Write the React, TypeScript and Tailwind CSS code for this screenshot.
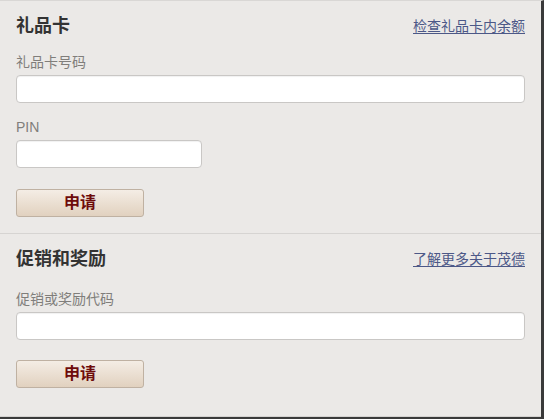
import React from 'react';

const font = "font-['Liberation_Sans','Noto_Sans_CJK_SC',sans-serif]";

const Field = ({ label, className, mt }: { label: string; className: string; mt: string }) => (
  <div>
    <div className={`${mt} text-[14px] leading-[16px] text-[#807e7b]`}>{label}</div>
    <input
      type="text"
      className={`mt-[5px] block h-[28px] rounded-[4px] border border-[#c9c7c5] bg-white shadow-[inset_0_1px_1px_rgba(0,0,0,0.06)] outline-none ${className}`}
    />
  </div>
);

const ApplyButton = ({ mt }: { mt: string }) => (
  <button
    type="button"
    className={`${mt} block h-[28px] w-[128px] rounded-[3px] border border-[#bfb1a2] bg-gradient-to-b from-[#f4ede5] to-[#e1d1bf] text-[16px] font-bold leading-none text-[#6e0b0b]`}
  >
    申请
  </button>
);

const Header = ({ title, link }: { title: string; link: string }) => (
  <div className="flex h-[22px] items-center justify-between">
    <h2 className="text-[18px] font-bold leading-[22px] text-[#333]">{title}</h2>
    <a href="#" className="text-[14px] leading-[18px] text-[#4c5887] underline underline-offset-2">
      {link}
    </a>
  </div>
);

export default function App() {
  return (
    <div className={`${font} h-[419px] w-[544px] border-t border-r-[3px] border-b-[2px] border-t-[#d9d7d5] border-r-[#3a3a3a] border-b-[#3a3a3a] bg-[#ebe9e7]`}>
      <div className="flex h-full flex-col border-b border-[#d4d2d0]">
        {/* 礼品卡 */}
        <section className="border-b border-[#d6d4d2] px-4 pt-[14px] pb-[16px]">
          <Header title="礼品卡" link="检查礼品卡内余额" />
          <Field label="礼品卡号码" mt="mt-[17px]" className="w-full" />
          <Field label="PIN" mt="mt-[16px]" className="w-[186px]" />
          <ApplyButton mt="mt-[21px]" />
        </section>

        {/* 促销和奖励 */}
        <section className="flex-1 px-4 pt-[14px]">
          <Header title="促销和奖励" link="了解更多关于茂德" />
          <Field label="促销或奖励代码" mt="mt-[21px]" className="w-full" />
          <ApplyButton mt="mt-[20px]" />
        </section>
      </div>
    </div>
  );
}
